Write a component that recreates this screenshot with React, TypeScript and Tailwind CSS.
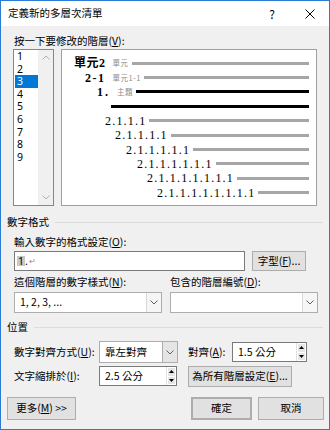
import type { ReactNode } from 'react';

const UI = "font-['Noto_Sans_CJK_TC','Noto_Sans',sans-serif]";
const SERIF = "font-['Liberation_Serif','Noto_Sans_CJK_TC',serif]";

const LEVELS = ['1', '2', '3', '4', '5', '6', '7', '8', '9'];

// 預覽區每一列
const PREVIEW_ROWS = [
  { pad: 'pl-[12px]', text: '單元2', weight: 'font-bold tracking-[0.5px]', small: '單元', line: 'bg-[#a6a6a6]' },
  { pad: 'pl-[23px]', text: '2-1', weight: 'font-bold tracking-[1.5px]', small: '單元1-1', line: 'bg-[#a6a6a6]' },
  { pad: 'pl-[35px]', text: '1.', weight: 'font-bold tracking-[2px]', small: '主題', line: 'bg-black' },
  { pad: 'pl-[46px]', text: '', weight: '', small: '', line: 'bg-black' },
  { pad: 'pl-[43px]', text: '2.1.1.1', weight: 'tracking-[1.2px]', small: '', line: 'bg-[#a6a6a6]' },
  { pad: 'pl-[53px]', text: '2.1.1.1.1', weight: 'tracking-[1.2px]', small: '', line: 'bg-[#a6a6a6]' },
  { pad: 'pl-[64px]', text: '2.1.1.1.1.1', weight: 'tracking-[1.2px]', small: '', line: 'bg-[#a6a6a6]' },
  { pad: 'pl-[75px]', text: '2.1.1.1.1.1.1', weight: 'tracking-[1.2px]', small: '', line: 'bg-[#a6a6a6]' },
  { pad: 'pl-[85px]', text: '2.1.1.1.1.1.1.1', weight: 'tracking-[1.2px]', small: '', line: 'bg-[#a6a6a6]' },
  { pad: 'pl-[95px]', text: '2.1.1.1.1.1.1.1.1', weight: 'tracking-[1.2px]', small: '', line: 'bg-[#a6a6a6]' },
];

const Chevron = ({ up = false, className = '' }: { up?: boolean; className?: string }) => (
  <svg width="8" height="5" viewBox="0 0 8 5" className={className}>
    <path
      d={up ? 'M0.5 4.5 L4 1 L7.5 4.5' : 'M0.5 0.5 L4 4 L7.5 0.5'}
      fill="none"
      stroke="currentColor"
      strokeWidth="1"
    />
  </svg>
);

const Tri = ({ up = false }: { up?: boolean }) => (
  <svg width="5" height="3" viewBox="0 0 5 3">
    <path d={up ? 'M0 3 L2.5 0 L5 3 Z' : 'M0 0 L2.5 3 L5 0 Z'} fill="#000" />
  </svg>
);

const Button = ({ children, className = '' }: { children: ReactNode; className?: string }) => (
  <div
    className={`flex items-center justify-center border border-[#adadad] bg-[#e1e1e1] text-[10.5px] leading-none text-black ${className}`}
  >
    {children}
  </div>
);

const Spin = ({ value, width }: { value: string; width: string }) => (
  <div className={`flex h-[20px] border border-[#7a7a7a] bg-white ${width}`}>
    <div className="flex flex-1 items-center pl-[5px] text-[10.5px] leading-none">{value}</div>
    <div className="flex w-[10px] flex-col gap-px border-l border-[#e0e0e0] bg-white p-px">
      <div className="flex flex-1 items-center justify-center bg-[#e6e6e6]">
        <Tri up />
      </div>
      <div className="flex flex-1 items-center justify-center bg-[#e6e6e6]">
        <Tri />
      </div>
    </div>
  </div>
);

const Combo = ({ value, width, gray = false }: { value: string; width: string; gray?: boolean }) => (
  <div className={`flex border border-[#adadad] ${gray ? 'bg-[#e1e1e1]' : 'bg-white'} ${width}`}>
    <div className="flex flex-1 items-center bg-white pl-[5px] text-[10.5px] leading-none">{value}</div>
    <div
      className={`flex w-[15px] items-center justify-center border-l text-[#606060] ${
        gray ? 'border-[#adadad] bg-[#e5e5e5]' : 'border-[#d9d9d9] bg-[#f6f6f6]'
      }`}
    >
      <Chevron />
    </div>
  </div>
);

const SectionTitle = ({ label }: { label: string }) => (
  <div className="flex h-[14px] items-center pl-[6px] pr-[6px]">
    <span className="text-[10.5px] leading-none">{label}</span>
    <div className="ml-[6px] h-px flex-1 bg-[#dcdcdc]" />
  </div>
);

const App = () => {
  return (
    <div
      className={`flex h-[430px] w-[330px] flex-col border border-[#2b7bd6] bg-[#f0f0f0] text-black ${UI}`}
    >
      {/* 標題列 */}
      <div className="flex h-[25px] items-center bg-white pl-[7px]">
        <span className="text-[10.5px] leading-none">定義新的多層次清單</span>
        <span className="ml-auto text-[12px] leading-none">?</span>
        <svg width="10" height="10" viewBox="0 0 10 10" className="ml-[30px] mr-[14px]">
          <path d="M0.5 0.5 L9.5 9.5 M9.5 0.5 L0.5 9.5" stroke="#000" strokeWidth="1" />
        </svg>
      </div>

      <div className="mt-[8px] flex h-[15px] items-center pl-[13px] text-[10.5px] leading-none">
        按一下要修改的階層(<span className="underline">V</span>):
      </div>

      {/* 階層清單與預覽 */}
      <div className="flex h-[157px] gap-[7px] pl-[12px]">
        <div className="flex w-[41px] border border-[#828790] bg-white">
          <div className="flex flex-1 flex-col font-['Noto_Sans',sans-serif]">
            {LEVELS.map((lv) => (
              <div
                key={lv}
                className={`ml-px h-[12.6px] pl-[2px] text-[10.5px] leading-[12.6px] ${
                  lv === '3' ? 'bg-[#0078d7] text-white' : ''
                }`}
              >
                {lv}
              </div>
            ))}
          </div>
          <div className="flex w-[15px] flex-col items-center justify-between bg-[#f0f0f0] py-[5px] text-[#b0b0b0]">
            <Chevron up />
            <Chevron />
          </div>
        </div>

        <div className="flex w-[256px] flex-col border border-[#a0a0a0] bg-white pt-[6px] pr-[7px]">
          {PREVIEW_ROWS.map((row, idx) => (
            <div key={idx} className={`flex h-[14.4px] items-center ${row.pad}`}>
              {row.text && (
                <span className={`${SERIF} text-[12px] leading-none ${row.weight}`}>{row.text}</span>
              )}
              {row.small && (
                <span className={`${UI} ml-[7px] text-[7.5px] leading-none tracking-[0.5px] text-[#8c8c8c]`}>
                  {row.small}
                </span>
              )}
              <div className={`ml-[3px] h-[3px] flex-1 ${row.line}`} />
            </div>
          ))}
        </div>
      </div>

      {/* 數字格式 */}
      <div className="mt-[9px]">
        <SectionTitle label="數字格式" />
      </div>
      <div className="mt-[6px] flex h-[14px] items-center pl-[13px] text-[10.5px] leading-none">
        輸入數字的格式設定(<span className="underline">O</span>):
      </div>
      <div className="mt-[2px] flex h-[20px] gap-[7px] pl-[13px]">
        <div className="flex w-[231px] items-center border border-[#7a7a7a] bg-white pl-[2px] text-[10.5px] leading-none">
          <span className="bg-[#c8c8c8] px-[1px] font-['Noto_Sans',sans-serif]">1</span>
          <span className="font-['Noto_Sans',sans-serif]">.</span>
          <span className="ml-px text-[8px] text-[#8c8c8c]">↵</span>
        </div>
        <Button className="w-[54px]">
          字型(<span className="underline">F</span>)...
        </Button>
      </div>

      <div className="mt-[4px] flex h-[14px] items-center pl-[13px] text-[10.5px] leading-none">
        <span className="w-[156px]">
          這個階層的數字樣式(<span className="underline">N</span>):
        </span>
        <span>
          包含的階層編號(<span className="underline">D</span>):
        </span>
      </div>
      <div className="mt-[3px] flex h-[21px] gap-[8px] pl-[13px]">
        <Combo value="1, 2, 3, ..." width="w-[148px]" />
        <Combo value="" width="w-[148px]" />
      </div>

      {/* 位置 */}
      <div className="mt-[7px]">
        <SectionTitle label="位置" />
      </div>
      <div className="mt-[7px] flex h-[22px] items-center pl-[13px] text-[10.5px] leading-none">
        <span className="w-[85px]">
          數字對齊方式(<span className="underline">U</span>):
        </span>
        <Combo value="靠左對齊" width="w-[79px] h-[22px]" gray />
        <span className="ml-[10px] w-[44px]">
          對齊(<span className="underline">A</span>):
        </span>
        <Spin value="1.5 公分" width="w-[75px]" />
      </div>
      <div className="mt-[3px] flex h-[20px] items-center pl-[13px] text-[10.5px] leading-none">
        <span className="w-[85px]">
          文字縮排於(<span className="underline">I</span>):
        </span>
        <Spin value="2.5 公分" width="w-[78px]" />
        <Button className="ml-[11px] h-[21px] w-[104px]">
          為所有階層設定(<span className="underline">E</span>)...
        </Button>
      </div>

      {/* 底部按鈕 */}
      <div className="mt-[11px] flex h-[23px] pl-[6px] pr-[5px]">
        <Button className="w-[69px]">
          更多(<span className="underline">M</span>) &gt;&gt;
        </Button>
        <Button className="ml-auto w-[61px] border-2 border-[#0078d7]">確定</Button>
        <Button className="ml-[6px] w-[66px]">取消</Button>
      </div>
    </div>
  );
};

export default App;
